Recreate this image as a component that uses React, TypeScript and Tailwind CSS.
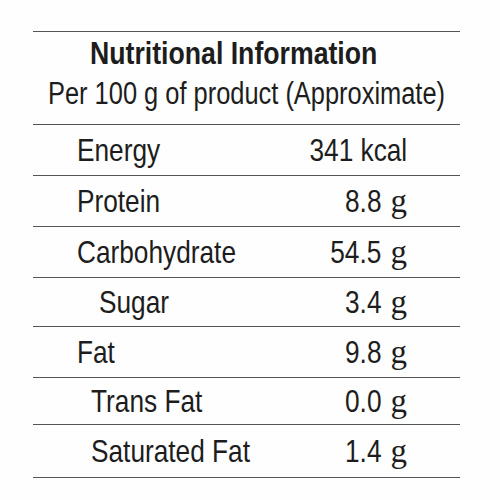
const rows = [
  { label: "Energy", value: "341 kcal", unit: "", indent: "pl-[44px]", h: "h-[51px]" },
  { label: "Protein", value: "8.8", unit: "g", indent: "pl-[44px]", h: "h-[51px]" },
  { label: "Carbohydrate", value: "54.5", unit: "g", indent: "pl-[44px]", h: "h-[51px]" },
  { label: "Sugar", value: "3.4", unit: "g", indent: "pl-[66px]", h: "h-[49px]" },
  { label: "Fat", value: "9.8", unit: "g", indent: "pl-[44px]", h: "h-[51px]" },
  { label: "Trans Fat", value: "0.0", unit: "g", indent: "pl-[58px]", h: "h-[47px]" },
  { label: "Saturated Fat", value: "1.4", unit: "g", indent: "pl-[58px]", h: "h-[53px]" },
];

// the label face is a condensed grotesque; squeeze Liberation Sans to match
const narrow = "inline-block whitespace-nowrap scale-x-[0.82]";

export default function App() {
  return (
    <div className="w-[500px] h-[500px] overflow-hidden bg-[#fefefe] pt-[31px] pl-[33px] text-[#1d1d1d] font-['Liberation_Sans',sans-serif]">
      <div className="w-[427px] border-t border-[#555]">
        {/* header */}
        <div className="h-[93px] border-b border-[#555] flex flex-col">
          <div className="pl-[57px] pt-[3px] text-[31px] font-bold leading-[38px] overflow-hidden">
            <span className="inline-block whitespace-nowrap origin-left scale-x-[0.86]">Nutritional Information</span>
          </div>
          <div className="mt-[1px] pl-[15px] text-[31px] leading-[40px] overflow-hidden">
            <span className={`${narrow} origin-left`}>Per 100 g of product (Approximate)</span>
          </div>
        </div>

        {rows.map((r) => (
          <div
            key={r.label}
            className={`${r.h} ${r.indent} pr-[53px] border-b border-[#555] flex items-center justify-between text-[32px] leading-none`}
          >
            <span className={`${narrow} origin-left`}>{r.label}</span>
            <span className="flex items-baseline">
              <span className={`${narrow} origin-right`}>{r.value}</span>
              {r.unit && (
                <span className="ml-[9px] text-[33px] font-['Liberation_Serif',serif]">{r.unit}</span>
              )}
            </span>
          </div>
        ))}
      </div>
    </div>
  );
}
